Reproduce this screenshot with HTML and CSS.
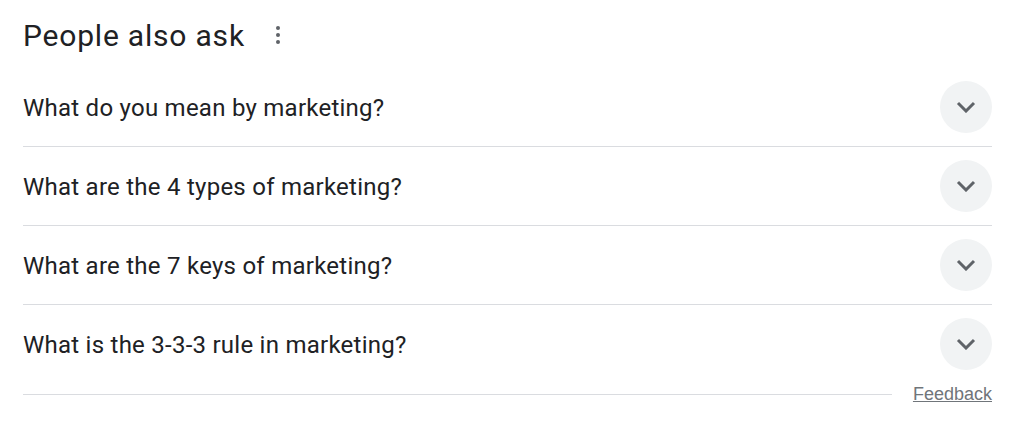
FILE: index.html
```html
<!DOCTYPE html>
<html lang="en">
<head>
    <meta charset="UTF-8">
    <meta name="viewport" content="width=device-width, initial-scale=1.0">
    <title>People also ask</title>
    <link rel="stylesheet" href="styles.css">
</head>
<body>

    <div class="paa">
        <div class="paa-head">
            <h2>People also ask</h2>
            <span class="more-dots">
                <svg width="4" height="18" viewBox="0 0 4 18">
                    <circle cx="2" cy="2" r="2"/>
                    <circle cx="2" cy="9" r="2"/>
                    <circle cx="2" cy="16" r="2"/>
                </svg>
            </span>
        </div>

        <div class="question">
            <span>What do you mean by marketing?</span>
            <button class="expand"><svg width="20" height="12" viewBox="0 0 20 12"><path d="M2 2l8 8 8-8"/></svg></button>
        </div>
        <div class="question">
            <span>What are the 4 types of marketing?</span>
            <button class="expand"><svg width="20" height="12" viewBox="0 0 20 12"><path d="M2 2l8 8 8-8"/></svg></button>
        </div>
        <div class="question">
            <span>What are the 7 keys of marketing?</span>
            <button class="expand"><svg width="20" height="12" viewBox="0 0 20 12"><path d="M2 2l8 8 8-8"/></svg></button>
        </div>
        <div class="question last">
            <span>What is the 3-3-3 rule in marketing?</span>
            <button class="expand"><svg width="20" height="12" viewBox="0 0 20 12"><path d="M2 2l8 8 8-8"/></svg></button>
        </div>

        <div class="paa-foot">
            <div class="rule"></div>
            <a href="#">Feedback</a>
        </div>
    </div>

</body>
</html>
```

FILE: styles.css
```css
body {
    margin: 0;
    background: white;
    font-family: Roboto, Arial, sans-serif;
    color: #202124;
}
.paa {
    width: 969px;
    padding-left: 23px;
}
.paa-head {
    height: 68px;
    display: flex;
    align-items: center;
    gap: 31px;
}
.paa-head h2 {
    margin: 0;
    font-size: 30px;
    font-weight: 400;
    letter-spacing: 0.8px;
    line-height: 36px;
    padding-top: 4px;
}
.more-dots svg {
    display: block;
    fill: #5f6368;
    margin-top: 2px;
}
.question {
    height: 78px;
    display: flex;
    align-items: center;
    justify-content: space-between;
    border-bottom: 1px solid #dadce0;
    font-size: 24px;
    letter-spacing: 0.25px;
}
.question span {
    padding-top: 2px;
}
.question.last {
    border-bottom: none;
}
.expand {
    width: 52px;
    height: 52px;
    border-radius: 50%;
    border: none;
    background: #f1f3f4;
    display: flex;
    align-items: center;
    justify-content: center;
    padding: 0;
}
.expand svg {
    fill: none;
    stroke: #5f6368;
    stroke-width: 3;
}
.paa-foot {
    display: flex;
    align-items: center;
    gap: 21px;
    margin-top: 1px;
}
.rule {
    flex: 1;
    border-top: 1px solid #dadce0;
}
.paa-foot a {
    font-family: Arial, "Liberation Sans", sans-serif;
    font-size: 18px;
    color: #70757a;
}
```
